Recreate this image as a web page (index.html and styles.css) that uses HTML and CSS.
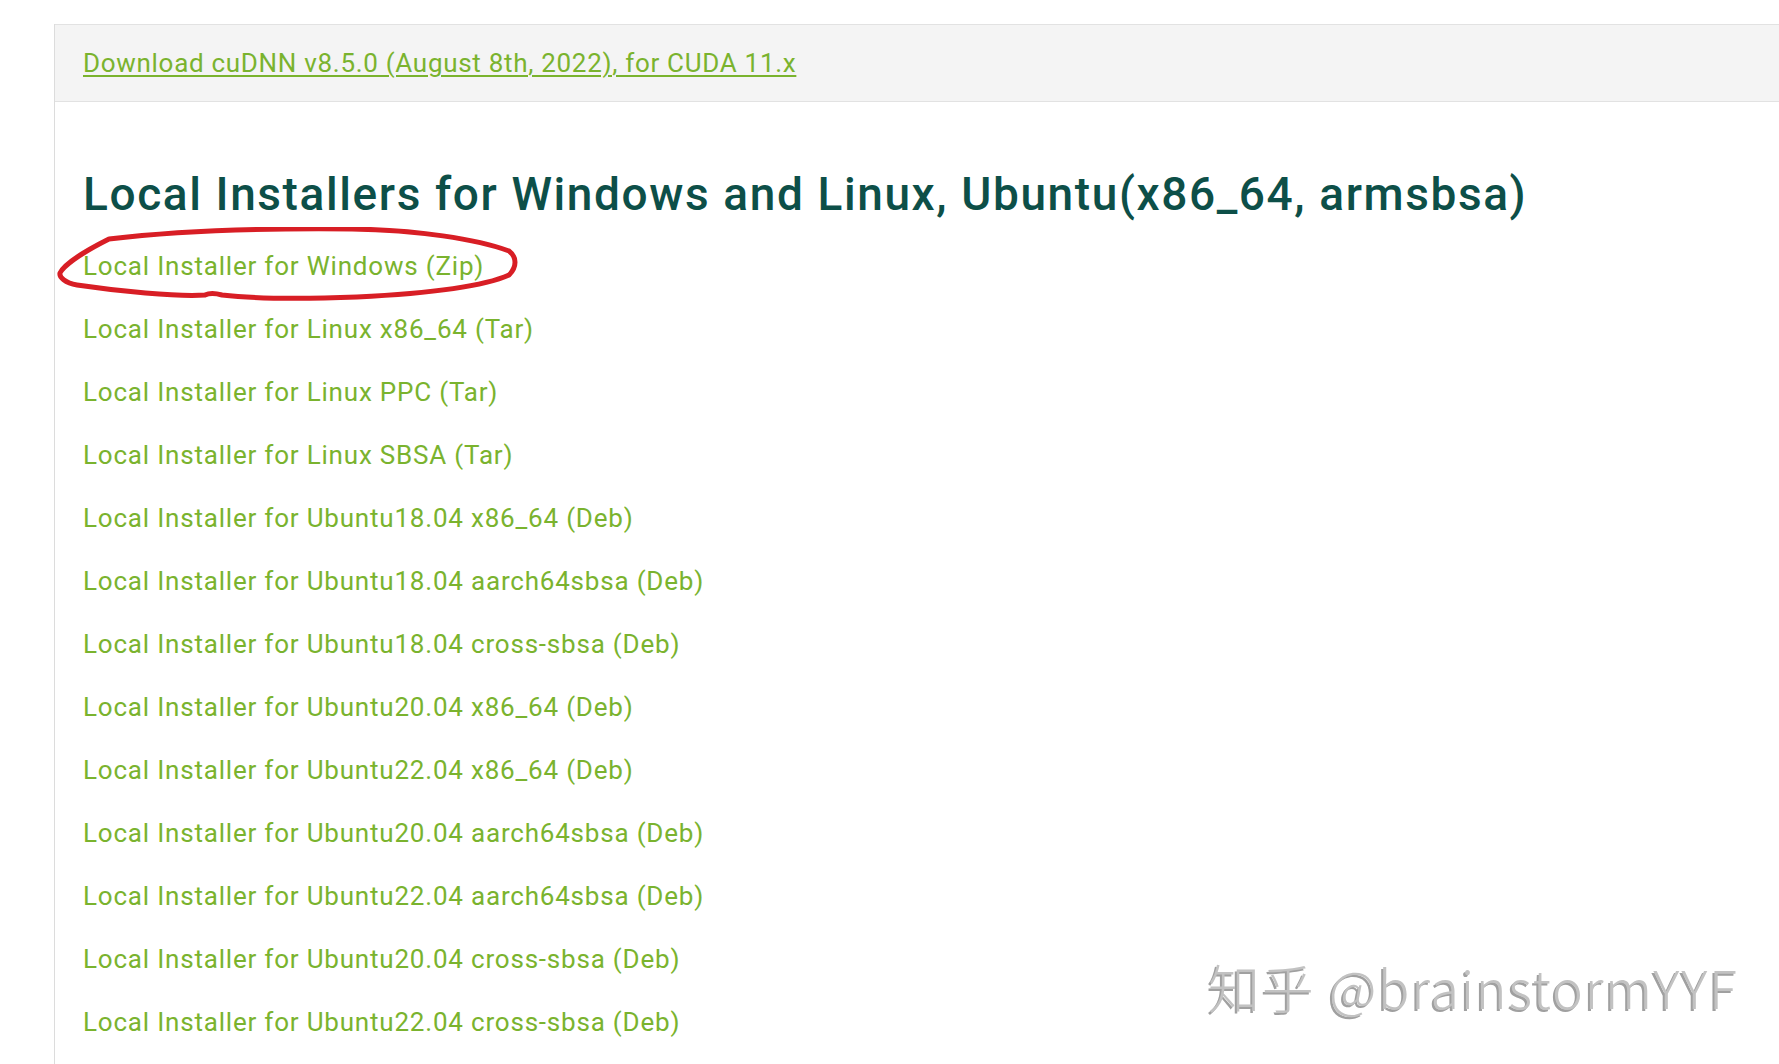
FILE: index.html
```html
<!DOCTYPE html>
<html lang="en">
<head>
<meta charset="utf-8">
<title>cuDNN Archive</title>
<link rel="stylesheet" href="styles.css">
</head>
<body>
<div class="panel">
  <div class="panel-head">
    <a class="release" href="#">Download cuDNN v8.5.0 (August 8th, 2022), for CUDA 11.x</a>
  </div>
  <div class="panel-body">
    <h2 class="title">Local Installers for Windows and Linux, Ubuntu(x86_64, armsbsa)</h2>
    <ul class="links">
      <li class="item item-marked"><a href="#">Local Installer for Windows (Zip)</a>
        <svg class="circle" viewBox="0 0 470 80" width="470" height="80" aria-hidden="true">
          <path d="M52 12 C 120 4, 200 1, 295 2 C 360 3, 420 12, 452 24 C 460 30, 460 40, 452 48 C 430 58, 380 66, 300 70 C 250 72, 200 72, 165 68 C 158 66, 152 66, 148 68 C 120 70, 60 64, 20 58 C 8 56, 2 50, 3 46 C 6 40, 20 28, 52 12"/>
        </svg>
      </li>
      <li class="item"><a href="#">Local Installer for Linux x86_64 (Tar)</a></li>
      <li class="item"><a href="#">Local Installer for Linux PPC (Tar)</a></li>
      <li class="item"><a href="#">Local Installer for Linux SBSA (Tar)</a></li>
      <li class="item"><a href="#">Local Installer for Ubuntu18.04 x86_64 (Deb)</a></li>
      <li class="item"><a href="#">Local Installer for Ubuntu18.04 aarch64sbsa (Deb)</a></li>
      <li class="item"><a href="#">Local Installer for Ubuntu18.04 cross-sbsa (Deb)</a></li>
      <li class="item"><a href="#">Local Installer for Ubuntu20.04 x86_64 (Deb)</a></li>
      <li class="item"><a href="#">Local Installer for Ubuntu22.04 x86_64 (Deb)</a></li>
      <li class="item"><a href="#">Local Installer for Ubuntu20.04 aarch64sbsa (Deb)</a></li>
      <li class="item"><a href="#">Local Installer for Ubuntu22.04 aarch64sbsa (Deb)</a></li>
      <li class="item"><a href="#">Local Installer for Ubuntu20.04 cross-sbsa (Deb)</a></li>
      <li class="item"><a href="#">Local Installer for Ubuntu22.04 cross-sbsa (Deb)</a></li>
    </ul>
  </div>
</div>
<div class="watermark">知乎 @brainstormYYF</div>
</body>
</html>
```

FILE: styles.css
```css
html, body {
  margin: 0;
  padding: 0;
  background: #ffffff;
  overflow: hidden;
}

body {
  font-family: Roboto, "Liberation Sans", sans-serif;
  height: 1064px;
  position: relative;
}

.panel {
  margin: 24px 0 0 54px;
  border-left: 1px solid #dcdcdc;
  min-height: 1040px;
}

.panel-head {
  background: #f4f4f4;
  border-top: 1px solid #e2e2e2;
  border-bottom: 1px solid #e2e2e2;
  height: 76px;
  display: flex;
  align-items: center;
  padding-left: 28px;
}

.release {
  color: #7ab32e;
  font-size: 26px;
  letter-spacing: 0.7px;
  text-decoration: underline;
  text-decoration-thickness: 2px;
  text-underline-offset: 3px;
}

.panel-body {
  padding: 0 0 0 28px;
}

.title {
  margin: 0;
  padding-top: 64px;
  font-size: 46px;
  font-weight: 500;
  letter-spacing: 1.6px;
  line-height: 56px;
  color: #0d4f48;
}

.links {
  list-style: none;
  margin: 0;
  padding: 0;
  padding-top: 13px;
}

.item {
  position: relative;
  line-height: 63px;
  height: 63px;
  font-size: 26px;
  letter-spacing: 0.8px;
}

.item a {
  color: #7ab32e;
  text-decoration: none;
}

.circle {
  position: absolute;
  left: -26px;
  top: -8px;
  fill: none;
  stroke: #d81e25;
  stroke-width: 5;
  stroke-linecap: round;
  pointer-events: none;
}

.watermark {
  position: absolute;
  left: 1208px;
  top: 952px;
  font-family: "Noto Sans CJK SC", "Noto Sans", sans-serif;
  font-size: 52px;
  font-weight: 300;
  letter-spacing: 1.8px;
  line-height: 70px;
  color: #c2c2c2;
  text-shadow: -2px 2px 0 #a0a0a0;
  white-space: nowrap;
}
```
